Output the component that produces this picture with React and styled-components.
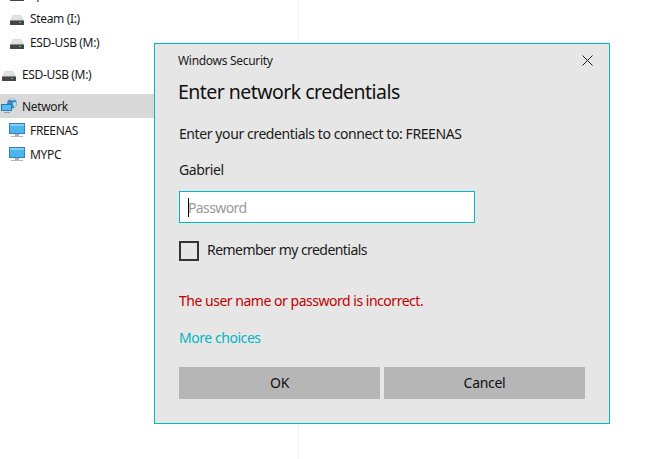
import React from 'react';
import styled, { createGlobalStyle } from 'styled-components';

const GlobalStyle = createGlobalStyle`
  html, body {
    margin: 0;
    padding: 0;
    width: 665px;
    height: 459px;
    overflow: hidden;
    background: #ffffff;
    font-family: "Noto Sans", "Open Sans", sans-serif;
  }
`;

const Page = styled.div`
  position: relative;
  width: 665px;
  height: 459px;
  overflow: hidden;
`;

const Sidebar = styled.div`
  box-sizing: border-box;
  width: 299px;
  height: 477px;
  margin-top: -18px;
  border-right: 1px solid #f0f0f0;
  display: flex;
  flex-direction: column;
`;

const Row = styled.div`
  height: 24px;
  flex: none;
  display: flex;
  align-items: center;
  gap: 5px;
  padding-left: ${props => props.$indent ? '9px' : '1px'};
  margin-bottom: ${props => props.$gap || 0}px;
  background: ${props => props.$selected ? '#d9d9d9' : 'transparent'};
  font-size: 12px;
  letter-spacing: -0.35px;
  color: #1a1a1a;
`;

const Dialog = styled.div`
  position: absolute;
  left: 154px;
  top: 43px;
  box-sizing: border-box;
  width: 456px;
  height: 381px;
  background: #e6e6e6;
  border: 1px solid #00b7c3;
  display: flex;
  flex-direction: column;
  padding: 8px 24px 24px;
  color: #1a1a1a;
`;

const TitleBar = styled.div`
  height: 17px;
  margin: 0 -8px 0 -1px;
  display: flex;
  align-items: center;
  justify-content: space-between;
  font-size: 12px;
  letter-spacing: -0.3px;
`;

const Heading = styled.h1`
  margin: 9px 0 0 -1px;
  font-size: 19.5px;
  line-height: 27px;
  font-weight: 400;
  letter-spacing: -0.54px;
  color: #111;
`;

const BodyText = styled.div`
  margin-top: ${props => props.$top}px;
  font-size: 14px;
  line-height: 19px;
  letter-spacing: -0.41px;
  color: #1a1a1a;
`;

const ErrorText = styled(BodyText)`
  letter-spacing: -0.48px;
  color: #c00000;
`;

const LinkText = styled(BodyText)`
  letter-spacing: -0.45px;
  color: #00b7c3;
`;

const PasswordBox = styled.div`
  box-sizing: border-box;
  margin-top: 12px;
  width: 296px;
  height: 32px;
  background: #fff;
  border: 1px solid #00b7c3;
  display: flex;
  align-items: center;
  padding-left: 8px;
  font-size: 14px;
  letter-spacing: -0.6px;
  color: #9a9a9a;
`;

const Caret = styled.span`
  width: 1px;
  height: 19px;
  background: #000;
  margin-right: -1px;
`;

const CheckRow = styled.div`
  margin-top: 18px;
  display: flex;
  align-items: center;
  gap: 8px;
  font-size: 14px;
  line-height: 20px;
  letter-spacing: -0.55px;
`;

const CheckLabel = styled.span`
  margin-top: -2px;
`;

const CheckBox = styled.span`
  box-sizing: border-box;
  width: 20px;
  height: 20px;
  border: 2px solid #333;
`;

const Buttons = styled.div`
  margin-top: auto;
  display: flex;
  gap: 4px;
`;

const Button = styled.div`
  flex: 1;
  box-sizing: border-box;
  height: 32px;
  padding-bottom: 2px;
  background: #b6b6b6;
  display: flex;
  align-items: center;
  justify-content: center;
  font-size: 14px;
  letter-spacing: -0.3px;
  color: #111;
`;

const DriveIcon = () => (
  <svg width="16" height="16" viewBox="0 0 16 16">
    <path d="M2 10 L4 5.5 H12 L14 10 Z" fill="#e2e2e2" stroke="#c4c4c4" strokeWidth="0.5" />
    <rect x="1" y="10" width="14" height="5" rx="0.5" fill="#444444" />
    <rect x="1" y="10" width="14" height="1" fill="#8c8c8c" />
    <rect x="10" y="12" width="2" height="1" fill="#39d353" />
  </svg>
);

const MonitorIcon = () => (
  <svg width="16" height="16" viewBox="0 0 16 16">
    <rect x="0.5" y="1.5" width="15" height="10" fill="#4db5ee" stroke="#3a7fb5" strokeWidth="1" />
    <rect x="1" y="2" width="14" height="2" fill="#7fd0f7" />
    <rect x="6" y="12" width="4" height="2" fill="#a9b2b9" />
    <rect x="2" y="14" width="12" height="1" fill="#aeb6bc" />
  </svg>
);

const NetworkIcon = () => (
  <svg width="16" height="16" viewBox="0 0 16 16">
    <circle cx="11" cy="5.5" r="5" fill="#3f86bd" />
    <path d="M8 1.5 Q11 3 14.5 2 L13 0.5 H9 Z M11.5 4.5 L15.5 4 L15.5 8 L13 9.5 Z" fill="#b9dcec" />
    <rect x="0.5" y="6.5" width="10" height="6" fill="#55bdf2" stroke="#2a78b6" strokeWidth="1" />
    <rect x="3" y="14" width="6" height="1" fill="#8fa0ad" />
  </svg>
);

const CloseIcon = () => (
  <svg width="11" height="11" viewBox="0 0 11 11">
    <path d="M0.5 0.5 L10.5 10.5 M10.5 0.5 L0.5 10.5" stroke="#1a1a1a" strokeWidth="1" fill="none" />
  </svg>
);

const App = () => (
  <Page>
    <GlobalStyle />
    <Sidebar>
      <Row $indent>
        <DriveIcon />
        Spare
      </Row>
      <Row $indent>
        <DriveIcon />
        Steam (I:)
      </Row>
      <Row $indent $gap={8}>
        <DriveIcon />
        ESD-USB (M:)
      </Row>
      <Row $gap={8}>
        <DriveIcon />
        ESD-USB (M:)
      </Row>
      <Row $selected>
        <NetworkIcon />
        Network
      </Row>
      <Row $indent>
        <MonitorIcon />
        FREENAS
      </Row>
      <Row $indent>
        <MonitorIcon />
        MYPC
      </Row>
    </Sidebar>
    <Dialog>
      <TitleBar>
        Windows Security
        <CloseIcon />
      </TitleBar>
      <Heading>Enter network credentials</Heading>
      <BodyText $top={19}>Enter your credentials to connect to: FREENAS</BodyText>
      <BodyText $top={17}>Gabriel</BodyText>
      <PasswordBox>
        <Caret />
        Password
      </PasswordBox>
      <CheckRow>
        <CheckBox />
        <CheckLabel>Remember my credentials</CheckLabel>
      </CheckRow>
      <ErrorText $top={30}>The user name or password is incorrect.</ErrorText>
      <LinkText $top={18}>More choices</LinkText>
      <Buttons>
        <Button>OK</Button>
        <Button>Cancel</Button>
      </Buttons>
    </Dialog>
  </Page>
);

export default App;
